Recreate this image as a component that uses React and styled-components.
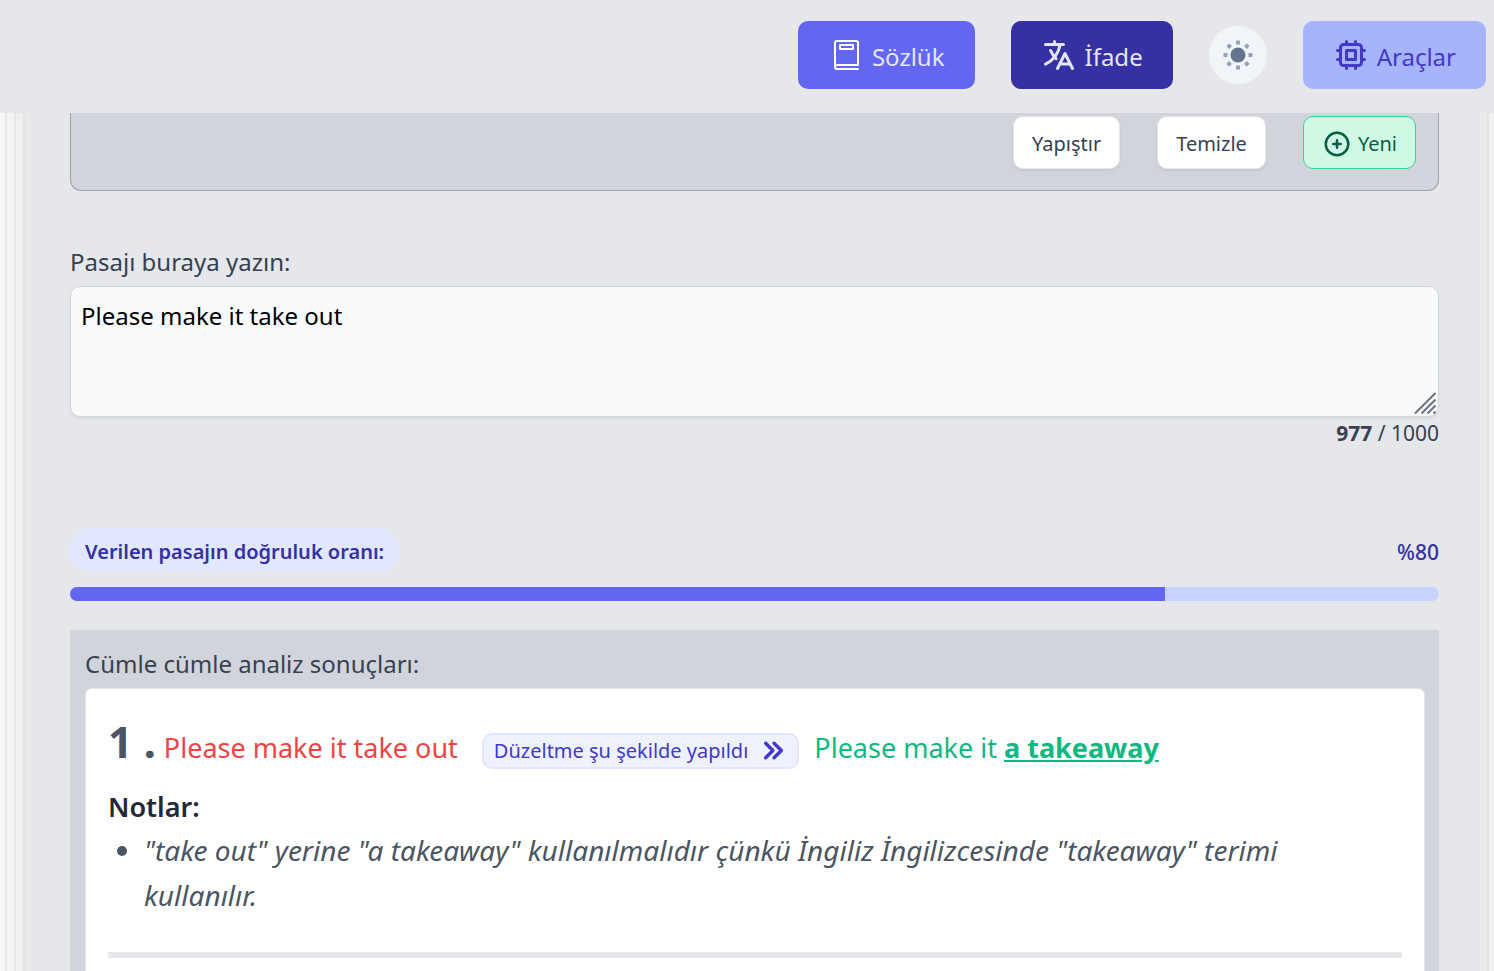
import React, { useState } from "react";
import styled, { createGlobalStyle, css } from "styled-components";

const Colors = {
  background: "#e5e7eb",
  panel: "#d1d5db",
  indigo: "#6366f1",
  indigoDark: "#3730a3",
  indigoText: "#4338ca",
  gray: "#374151",
  red: "#ef4444",
  green: "#10b981"
};

const LIMIT = 1000;

const App = () => {
  const [text, setText] = useState("Please make it take out");
  const accuracy = 80;

  return (
    <Page>
      <GlobalStyle />

      <Header>
        <NavButton variant="dictionary">
          <BookIcon />
          Sözlük
        </NavButton>
        <NavButton variant="phrase">
          <TranslateIcon />
          İfade
        </NavButton>
        <ThemeButton aria-label="Tema">
          <SunIcon />
        </ThemeButton>
        <NavButton variant="tools">
          <ChipIcon />
          Araçlar
        </NavButton>
      </Header>

      <Main>
        <Toolbar>
          <ToolButton>Yapıştır</ToolButton>
          <ToolButton>Temizle</ToolButton>
          <ToolButton highlight>
            <PlusIcon />
            Yeni
          </ToolButton>
        </Toolbar>

        <Label htmlFor="passage">Pasajı buraya yazın:</Label>
        <Field>
          <Passage
            id="passage"
            value={text}
            maxLength={LIMIT}
            spellCheck={false}
            onChange={e => setText(e.target.value)}
          />
          <Grip viewBox="0 0 24 24" aria-hidden="true">
            <path d="M2 22.500L22.500 2M8.500 22.500L22.500 8.500M14.500 22.500L22.500 14.500M20.500 22.500L22.500 20.500" />
          </Grip>
        </Field>
        <Counter>
          <b>{LIMIT - text.length}</b> / {LIMIT}
        </Counter>

        <ScoreRow>
          <ScoreLabel id="score">Verilen pasajın doğruluk oranı:</ScoreLabel>
          <ScoreValue>%{accuracy}</ScoreValue>
        </ScoreRow>
        <Track role="progressbar" aria-labelledby="score" aria-valuenow={accuracy}>
          <Fill style={{ width: `${accuracy}%` }} />
        </Track>

        <Results>
          <ResultsTitle>Cümle cümle analiz sonuçları:</ResultsTitle>
          <Card>
            <Sentence>
              <Index>1 .</Index>
              <Wrong>Please make it take out</Wrong>
              <Badge>
                Düzeltme şu şekilde yapıldı
                <ChevronsIcon />
              </Badge>
              <Right>
                Please make it <u>a takeaway</u>
              </Right>
            </Sentence>
            <NotesTitle>Notlar:</NotesTitle>
            <Notes>
              <li>
                "take out" yerine "a takeaway" kullanılmalıdır çünkü İngiliz
                İngilizcesinde "takeaway" terimi kullanılır.
              </li>
            </Notes>
            <Divider />
          </Card>
        </Results>
      </Main>
    </Page>
  );
};

// icons
const BookIcon = () => (
  <Icon size={36} viewBox="0 0 36 36">
    <path d="M30 28V6a2 2 0 0 0-2-2H9a2 2 0 0 0-2 2V30a2 2 0 0 0 2 2h21M7 30a2 2 0 0 1 2-2h21" />
    <path d="M12 8h13v4h-13z" />
  </Icon>
);

const TranslateIcon = () => (
  <Icon size={36} viewBox="0 0 24 24">
    <path d="M3 5h12M9 3v2m1.048 9.500A18.022 18.022 0 0 1 6.412 9m6.088 9h7M11 21l5-10 5 10M12.751 5C11.783 10.770 8.070 15.610 3 18.129" />
  </Icon>
);

const ChipIcon = () => (
  <Icon size={36} viewBox="0 0 24 24">
    <path d="M9 3v2m6-2v2M9 19v2m6-2v2M5 9H3m2 6H3m18-6h-2m2 6h-2M7 19h10a2 2 0 0 0 2-2V7a2 2 0 0 0-2-2H7a2 2 0 0 0-2 2v10a2 2 0 0 0 2 2zM9 9h6v6H9V9z" />
  </Icon>
);

const PlusIcon = () => (
  <Icon size={30} viewBox="0 0 24 24">
    <path d="M12 9v6m3-3H9m12 0a9 9 0 1 1-18 0 9 9 0 0 1 18 0z" />
  </Icon>
);

const ChevronsIcon = () => (
  <Icon size={27} viewBox="0 0 24 24" weight={3}>
    <path d="M12.500 5.500L19 12l-6.500 6.500M5 5.500L11.500 12L5 18.500" />
  </Icon>
);

const SunIcon = () => (
  <SunSvg viewBox="0 0 30 30" aria-hidden="true">
    <circle cx="15" cy="15" r="7.500" />
    {[0, 45, 90, 135, 180, 225, 270, 315].map(angle => (
      <rect
        key={angle}
        x="13"
        y="0.500"
        width="4"
        height="4"
        rx="0.500"
        transform={`rotate(${angle} 15 15)`}
      />
    ))}
  </SunSvg>
);

// style
const GlobalStyle = createGlobalStyle`
  * {
    box-sizing: border-box;
  }

  body {
    margin: 0;
    font-family: "Noto Sans", "Open Sans", sans-serif;
    color: ${Colors.gray};
    background: ${Colors.background};
  }

  button,
  textarea {
    font-family: inherit;
  }
`;

const Page = styled.div`
  height: 100vh;
  overflow: hidden;
  display: flex;
  flex-direction: column;
`;

const Header = styled.header`
  flex: none;
  display: flex;
  justify-content: flex-end;
  align-items: center;
  gap: 36px;
  height: 113px;
  padding: 0 8px 4px;
`;

const navVariants = {
  dictionary: css`
    color: #e0e7ff;
    background: ${Colors.indigo};

    svg {
      color: #fff;
    }
  `,
  phrase: css`
    color: #e0e7ff;
    background: ${Colors.indigoDark};
  `,
  tools: css`
    color: ${Colors.indigoText};
    background: #a5b4fc;
  `
};

const NavButton = styled.button`
  display: flex;
  align-items: center;
  gap: 8px;
  height: 68px;
  padding: 4px 30px 0;
  border: 0;
  border-radius: 10px;
  font-size: 24px;
  ${({ variant }) => navVariants[variant]}

  svg {
    margin-bottom: 4px;
  }
`;

const ThemeButton = styled.button`
  display: flex;
  align-items: center;
  justify-content: center;
  width: 58px;
  height: 58px;
  padding: 0;
  border: 0;
  border-radius: 50%;
  background: #f1f5f9;
`;

const Icon = styled.svg.attrs({ "aria-hidden": true })`
  flex: none;
  width: ${({ size }) => size}px;
  height: ${({ size }) => size}px;
  fill: none;
  stroke: currentColor;
  stroke-width: ${({ weight }) => weight || 2};
  stroke-linecap: round;
  stroke-linejoin: round;
`;

const SunSvg = styled.svg`
  width: 30px;
  height: 30px;
  fill: #94a3b8;

  circle {
    fill: #64748b;
  }
`;

/* thin edges of the stacked sheets on both sides */
const Main = styled.main`
  flex: 1;
  display: flex;
  flex-direction: column;
  padding: 0 55px 0 70px;
  background:
    linear-gradient(
      to right,
      #f6f6f6 5px,
      #e8e8e8 5px 7px,
      #f3f3f3 7px 14px,
      #e6e6e6 14px 16px,
      #efefef 16px 23px,
      #e3e3e3 23px 25px,
      #e9e9e9 25px
    ) left / 31px 100% no-repeat,
    linear-gradient(
      to left,
      #f0f0f0 5px,
      #e3e3e3 5px 7px,
      #ececec 7px
    ) right / 14px 100% no-repeat;
`;

const Toolbar = styled.div`
  display: flex;
  justify-content: flex-end;
  gap: 37px;
  padding: 3px 22px 21px;
  border: 1px solid #9ca3af;
  border-top: 0;
  border-radius: 0 0 11px 11px;
  background: ${Colors.panel};
`;

const ToolButton = styled.button`
  display: flex;
  align-items: center;
  gap: 6px;
  height: 53px;
  padding: 2px 18px 0;
  border: 1px solid ${({ highlight }) => (highlight ? "#34d399" : "#e5e7eb")};
  border-radius: 10px;
  font-size: 20px;
  color: ${({ highlight }) => (highlight ? "#065f46" : Colors.gray)};
  background: ${({ highlight }) => (highlight ? "#d1fae5" : "#fff")};
  box-shadow: ${({ highlight }) =>
    highlight ? "none" : "0 2px 3px rgba(0, 0, 0, 0.06)"};
`;

const Label = styled.label`
  margin-top: 53px;
  font-size: 24px;
  line-height: 36px;
`;

const Field = styled.div`
  position: relative;
  display: flex;
  margin-top: 6px;
`;

const Passage = styled.textarea`
  flex: 1;
  height: 131px;
  padding: 11px 10px;
  border: 1px solid ${Colors.panel};
  border-radius: 10px;
  outline: none;
  resize: none;
  font-size: 24px;
  line-height: 36px;
  color: #000;
  background: #f9fafb;
  box-shadow: 0 2px 3px rgba(0, 0, 0, 0.06);
`;

const Grip = styled.svg`
  position: absolute;
  right: 2px;
  bottom: 2px;
  width: 24px;
  height: 24px;
  stroke: #6b7280;
  stroke-width: 2;
`;

const Counter = styled.p`
  margin: 0;
  font-size: 21px;
  line-height: 32px;
  text-align: right;
`;

const ScoreRow = styled.div`
  display: flex;
  align-items: center;
  justify-content: space-between;
  margin-top: 79px;
  color: ${Colors.indigoDark};
`;

const ScoreLabel = styled.span`
  padding: 6px 15px 2px;
  border-radius: 22px;
  font-size: 20px;
  font-weight: 600;
  line-height: 36px;
  background: #e0e7ff;
`;

const ScoreValue = styled.span`
  padding: 6px 0 2px;
  font-size: 21px;
  font-weight: 500;
  line-height: 36px;
`;

const Track = styled.div`
  flex: none;
  height: 14px;
  margin-top: 15px;
  border-radius: 7px;
  overflow: hidden;
  background: #c7d2fe;
`;

const Fill = styled.div`
  height: 100%;
  background: ${Colors.indigo};
`;

const Results = styled.section`
  flex: 1;
  display: flex;
  flex-direction: column;
  margin-top: 29px;
  padding: 16px 14px 0 15px;
  background: ${Colors.panel};
`;

const ResultsTitle = styled.h2`
  margin: 0;
  font-size: 24px;
  font-weight: 400;
  line-height: 36px;
`;

const Card = styled.article`
  flex: 1;
  margin-top: 6px;
  padding: 21px 22px 0;
  border: 1px solid ${Colors.background};
  border-bottom: 0;
  border-radius: 7px 7px 0 0;
  background: #fff;
`;

const Sentence = styled.div`
  display: flex;
  align-items: baseline;
  font-size: 27px;
  line-height: 64px;
`;

const Index = styled.span`
  margin-right: 8px;
  font-size: 43px;
  font-weight: 700;
  color: #4b5563;
`;

const Wrong = styled.span`
  color: ${Colors.red};
`;

const Badge = styled.span`
  display: flex;
  align-items: center;
  gap: 12px;
  height: 36px;
  margin: 0 15px 0 24px;
  padding: 0 10px;
  border: 2px solid #e0e7ff;
  border-radius: 10px;
  font-size: 20px;
  line-height: 32px;
  color: ${Colors.indigoText};
  background: #eef2ff;

  svg {
    margin-bottom: 2px;
  }
`;

const Right = styled.span`
  color: ${Colors.green};

  u {
    font-weight: 700;
  }
`;

const NotesTitle = styled.h3`
  margin: 6px 0 0;
  font-size: 27px;
  font-weight: 600;
  line-height: 42px;
  color: #1f2937;
`;

const Notes = styled.ul`
  margin: 0;
  padding: 0 36px;
  font-size: 28px;
  font-style: italic;
  line-height: 45px;
  color: #4b5563;
`;

const Divider = styled.hr`
  height: 6px;
  margin: 34px 0 0;
  border: 0;
  background: ${Colors.background};
`;

export default App;
